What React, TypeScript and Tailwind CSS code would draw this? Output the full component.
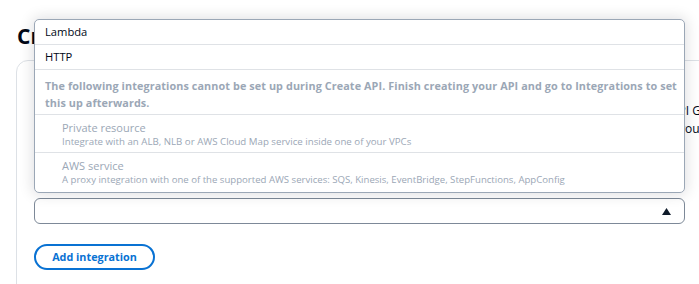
import React from "react";

export default function App() {
  return (
    <div className="relative w-[699px] h-[284px] overflow-hidden bg-white font-['Open_Sans',sans-serif] text-[#000716]">
      <h1 className="pl-[17px] pt-[24px] text-[21px] font-bold leading-[24px] whitespace-nowrap">Create an API</h1>
      <div className="ml-[16px] mt-[12px] w-[740px] h-[260px] border border-[#dde1e6] rounded-tl-[12px] pl-[17px] pt-[41px]">
        <div className="text-[12px] leading-[18px] whitespace-nowrap">
          <p className="pl-[637px]">API Gateway</p>
          <p className="pl-[645px]">you can</p>
        </div>
        <div className="relative mt-[60px] w-[651px]">
          <div className="absolute left-0 right-0 bottom-full mb-[5px] z-10 bg-white border border-[#9ba7b6] rounded-[5px] shadow-[0_0_14px_2px_rgba(0,7,22,0.12)] overflow-hidden">
            <div className="h-[25px] flex items-center pl-[10px] text-[11.2px] border-b border-[#dfe2e6]">Lambda</div>
            <div className="h-[25px] flex items-center pl-[10px] text-[11.2px] border-b border-[#dfe2e6]">HTTP</div>
            <div className="pl-[10px] pt-[7px] pb-[5px] h-[45px] text-[10.8px] tracking-[0.1px] leading-[17px] font-bold text-[#9ba7b6] border-b border-[#dfe2e6] whitespace-nowrap">
              The following integrations cannot be set up during Create API. Finish creating your API and go to Integrations to set
              <br />
              this up afterwards.
            </div>
            <div className="h-[38px] pl-[27px] pt-[5px] text-[#9ba7b6] border-b border-[#dfe2e6]">
              <div className="text-[11px] leading-[15px]">Private resource</div>
              <div className="text-[9.7px] leading-[14px]">Integrate with an ALB, NLB or AWS Cloud Map service inside one of your VPCs</div>
            </div>
            <div className="h-[39px] pl-[27px] pt-[5px] text-[#9ba7b6]">
              <div className="text-[11px] leading-[15px]">AWS service</div>
              <div className="text-[9.6px] leading-[14px]">A proxy integration with one of the supported AWS services: SQS, Kinesis, EventBridge, StepFunctions, AppConfig</div>
            </div>
          </div>
          <div className="h-[26px] border-[1.5px] border-[#7d8998] rounded-[6px] bg-white flex items-center justify-end pr-[13px]">
            <svg width="9" height="7" viewBox="0 0 9 7"><polygon points="4.5,0 9,7 0,7" fill="#0f1b2a" /></svg>
          </div>
        </div>
        <button className="mt-[20px] h-[26px] w-[121px] rounded-full border-2 border-[#0972d3] text-[#0972d3] text-[10.8px] font-bold leading-[20px]">
          Add integration
        </button>
      </div>
    </div>
  );
}
